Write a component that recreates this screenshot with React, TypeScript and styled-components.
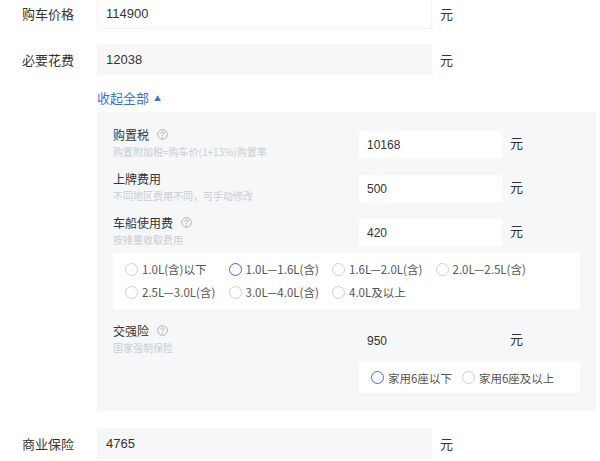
import styled, { createGlobalStyle } from "styled-components";

const GlobalStyle = createGlobalStyle`
  body {
    margin: 0;
    background: #fff;
    font-family: "Noto Sans CJK SC", "Liberation Sans", sans-serif;
    color: #333;
  }
`;

type Tone = "white" | "gray" | "plain";

const displacements = [
  "1.0L(含)以下",
  "1.0L—1.6L(含)",
  "1.6L—2.0L(含)",
  "2.0L—2.5L(含)",
  "2.5L—3.0L(含)",
  "3.0L—4.0L(含)",
  "4.0L及以上",
];

const HelpIcon = () => (
  <HelpMark width="11" height="11" viewBox="0 0 11 11">
    <circle cx="5.5" cy="5.5" r="4.8" fill="none" stroke="#a8a8a8" strokeWidth="0.9" />
    <path
      d="M4 4.3c0-.9.7-1.5 1.5-1.5s1.5.6 1.5 1.4c0 .7-.4 1-.9 1.3-.4.3-.6.5-.6 1v.3"
      fill="none"
      stroke="#a8a8a8"
      strokeWidth="0.9"
      strokeLinecap="round"
    />
    <circle cx="5.5" cy="8.2" r="0.55" fill="#a8a8a8" />
  </HelpMark>
);

const App = () => {
  return (
    <Page>
      <GlobalStyle />
      <MainRow $bottom={15}>
        <MainLabel>购车价格</MainLabel>
        <MainInput $tone="white" readOnly value="114900" />
        <Unit>元</Unit>
      </MainRow>
      <MainRow $bottom={13}>
        <MainLabel>必要花费</MainLabel>
        <MainInput $tone="gray" readOnly value="12038" />
        <Unit>元</Unit>
      </MainRow>

      <Toggle>
        收起全部<Caret>▲</Caret>
      </Toggle>

      <Panel>
        <FeeRow $bottom={17}>
          <LabelBlock>
            <FeeTitle>
              购置税
              <HelpIcon />
            </FeeTitle>
            <FeeSub>购置附加税=购车价(1+13%)购置率</FeeSub>
          </LabelBlock>
          <FeeInput $tone="white" readOnly value="10168" />
          <Unit>元</Unit>
        </FeeRow>

        <FeeRow $bottom={17}>
          <LabelBlock>
            <FeeTitle>上牌费用</FeeTitle>
            <FeeSub>不同地区费用不同，可手动修改</FeeSub>
          </LabelBlock>
          <FeeInput $tone="white" readOnly value="500" />
          <Unit>元</Unit>
        </FeeRow>

        <FeeRow $bottom={7}>
          <LabelBlock>
            <FeeTitle>
              车船使用费
              <HelpIcon />
            </FeeTitle>
            <FeeSub>按排量收取费用</FeeSub>
          </LabelBlock>
          <FeeInput $tone="white" readOnly value="420" />
          <Unit>元</Unit>
        </FeeRow>

        <RadioGrid>
          {displacements.map((d, i) => (
            <RadioItem key={d}>
              <RadioDot $checked={i === 1} />
              {d}
            </RadioItem>
          ))}
        </RadioGrid>

        <FeeRow $top={18} $bottom={8}>
          <LabelBlock>
            <FeeTitle>
              交强险
              <HelpIcon />
            </FeeTitle>
            <FeeSub>国家强制保险</FeeSub>
          </LabelBlock>
          <FeeInput $tone="plain" readOnly value="950" />
          <Unit>元</Unit>
        </FeeRow>

        <SeatBox>
          <RadioItem>
            <RadioDot $checked />
            家用6座以下
          </RadioItem>
          <RadioItem>
            <RadioDot />
            家用6座及以上
          </RadioItem>
        </SeatBox>
      </Panel>

      <MainRow $top={17}>
        <MainLabel>商业保险</MainLabel>
        <MainInput $tone="gray" readOnly value="4765" />
        <Unit>元</Unit>
      </MainRow>
    </Page>
  );
};
export default App;

const toneBg = (t: Tone) => (t === "white" ? "#fff" : t === "gray" ? "#f7f7f7" : "transparent");

const Page = styled.div`
  display: flex;
  flex-direction: column;
  margin-top: -2px;
  width: 600px;
`;

const MainRow = styled.div<{ $top?: number; $bottom?: number }>`
  display: flex;
  align-items: center;
  height: 31px;
  flex-shrink: 0;
  margin-top: ${(p) => p.$top ?? 0}px;
  margin-bottom: ${(p) => p.$bottom ?? 0}px;
`;

const MainLabel = styled.div`
  width: 75px;
  padding-left: 22px;
  font-size: 13px;
  color: #333;
`;

const MainInput = styled.input<{ $tone: Tone }>`
  box-sizing: border-box;
  width: 335px;
  height: 31px;
  padding: 0 0 0 8px;
  border: 1px solid ${(p) => (p.$tone === "white" ? "#f3f3f3" : "transparent")};
  background: ${(p) => toneBg(p.$tone)};
  font-family: "Liberation Sans", "Noto Sans CJK SC", sans-serif;
  font-size: 13px;
  color: #333;
  outline: none;
`;

const Unit = styled.span`
  margin-left: 8px;
  font-size: 13px;
  line-height: 23px;
  color: #333;
`;

const Toggle = styled.div`
  margin: 0 0 4px 97px;
  height: 20px;
  line-height: 20px;
  font-size: 13px;
  color: #3a6fd6;
`;

const Caret = styled.span`
  margin-left: 5px;
  font-size: 7px;
  vertical-align: 2px;
`;

const Panel = styled.div`
  margin-left: 97px;
  width: 499px;
  box-sizing: border-box;
  padding: 19px 16px 18px 16px;
  background: #f6f7f9;
`;

const FeeRow = styled.div<{ $top?: number; $bottom?: number }>`
  display: flex;
  align-items: flex-start;
  height: 27px;
  margin-top: ${(p) => p.$top ?? 0}px;
  margin-bottom: ${(p) => p.$bottom ?? 0}px;
`;

const LabelBlock = styled.div`
  width: 246px;
  margin-top: -5px;
`;

const FeeTitle = styled.div`
  display: flex;
  align-items: center;
  height: 16px;
  font-size: 12px;
  color: #333;
`;

const HelpMark = styled.svg`
  margin-left: 8px;
`;

const FeeSub = styled.div`
  margin-top: 3px;
  height: 13px;
  line-height: 13px;
  font-size: 10px;
  color: #c9ccd2;
  white-space: nowrap;
`;

const FeeInput = styled.input<{ $tone: Tone }>`
  box-sizing: border-box;
  width: 143px;
  height: 27px;
  padding: 0 0 0 8px;
  border: none;
  background: ${(p) => toneBg(p.$tone)};
  font-family: "Liberation Sans", "Noto Sans CJK SC", sans-serif;
  font-size: 12px;
  color: #333;
  outline: none;
`;

const RadioGrid = styled.div`
  display: grid;
  grid-template-columns: repeat(4, 103.5px);
  row-gap: 3px;
  padding: 6px 12px 7px;
  background: #fff;
`;

const RadioItem = styled.label`
  display: flex;
  align-items: center;
  gap: 4px;
  height: 20px;
  font-size: 11.5px;
  color: #555;
  white-space: nowrap;
`;

const RadioDot = styled.span<{ $checked?: boolean }>`
  box-sizing: border-box;
  width: 13px;
  height: 13px;
  border-radius: 50%;
  border: ${(p) => (p.$checked ? "1.5px solid #3a6fd6" : "1px solid #cfcfcf")};
  background: #fff;
  flex-shrink: 0;
`;

const SeatBox = styled.div`
  display: flex;
  align-items: center;
  gap: 10px;
  margin-left: 246px;
  width: 221px;
  height: 31px;
  box-sizing: border-box;
  padding-left: 12px;
  background: #fff;
`;
